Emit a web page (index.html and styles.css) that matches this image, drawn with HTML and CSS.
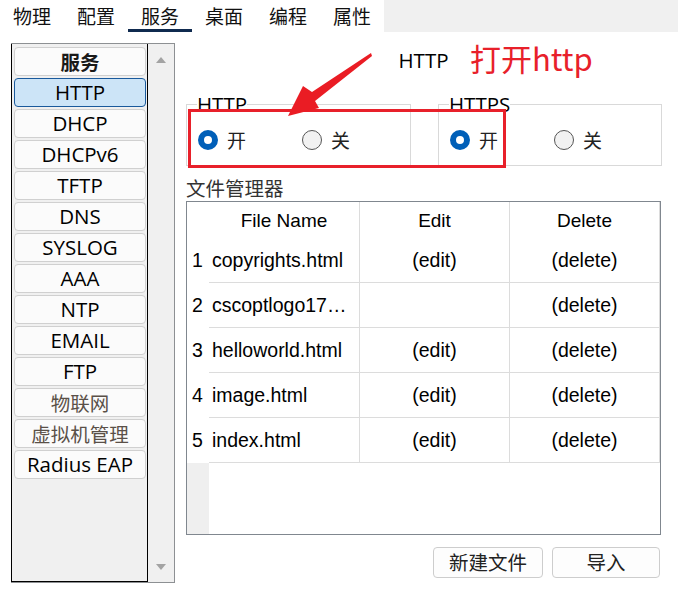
FILE: index.html
```html
<!DOCTYPE html>
<html lang="zh-CN">
<head>
<meta charset="utf-8">
<title>HTTP</title>
<link rel="stylesheet" href="styles.css">
</head>
<body>
<div class="page">
  <div class="tabbar">
    <div class="tab">物理</div>
    <div class="tab">配置</div>
    <div class="tab active">服务</div>
    <div class="tab">桌面</div>
    <div class="tab">编程</div>
    <div class="tab">属性</div>
    <div class="tabfill"></div>
  </div>
  <div class="main">
    <div class="sidebar">
      <div class="list">
        <div class="item cjk head">服务</div>
        <div class="item sel">HTTP</div>
        <div class="item">DHCP</div>
        <div class="item">DHCPv6</div>
        <div class="item">TFTP</div>
        <div class="item">DNS</div>
        <div class="item">SYSLOG</div>
        <div class="item">AAA</div>
        <div class="item">NTP</div>
        <div class="item">EMAIL</div>
        <div class="item">FTP</div>
        <div class="item cjk dim">物联网</div>
        <div class="item cjk dim">虚拟机管理</div>
        <div class="item">Radius EAP</div>
      </div>
      <div class="track">
        <span class="arrow up"></span>
        <span class="arrow down"></span>
      </div>
    </div>
    <div class="panel">
      <div class="title">HTTP</div>
      <div class="groups">
        <fieldset class="group">
          <legend>HTTP</legend>
          <div class="opts">
            <div class="opt"><span class="radio on"></span><span class="lbl">开</span></div>
            <div class="opt"><span class="radio"></span><span class="lbl">关</span></div>
          </div>
        </fieldset>
        <fieldset class="group">
          <legend>HTTPS</legend>
          <div class="opts">
            <div class="opt"><span class="radio on"></span><span class="lbl">开</span></div>
            <div class="opt"><span class="radio"></span><span class="lbl">关</span></div>
          </div>
        </fieldset>
      </div>
      <div class="fmlabel">文件管理器</div>
      <div class="table">
        <div class="grid">
          <div class="c num hdr"></div>
          <div class="c hdr ctr">File Name</div>
          <div class="c hdr ctr">Edit</div>
          <div class="c hdr ctr">Delete</div>

          <div class="c num">1</div>
          <div class="c row">copyrights.html</div>
          <div class="c row ctr">(edit)</div>
          <div class="c row ctr">(delete)</div>

          <div class="c num">2</div>
          <div class="c row">cscoptlogo17…</div>
          <div class="c row ctr"></div>
          <div class="c row ctr">(delete)</div>

          <div class="c num">3</div>
          <div class="c row">helloworld.html</div>
          <div class="c row ctr">(edit)</div>
          <div class="c row ctr">(delete)</div>

          <div class="c num">4</div>
          <div class="c row">image.html</div>
          <div class="c row ctr">(edit)</div>
          <div class="c row ctr">(delete)</div>

          <div class="c num">5</div>
          <div class="c row">index.html</div>
          <div class="c row ctr">(edit)</div>
          <div class="c row ctr">(delete)</div>
        </div>
        <div class="empty">
          <div class="emptynum"></div>
        </div>
      </div>
      <div class="buttons">
        <div class="btn wide">新建文件</div>
        <div class="btn">导入</div>
      </div>
    </div>
  </div>

  <div class="note">打开http</div>
  <div class="redbox"></div>
  <svg class="pointer" width="678" height="595" viewBox="0 0 678 595">
    <polygon points="371,53 312,92 303,86 288,116 319,108 315,101 372,56" fill="#ea1c24"/>
  </svg>
</div>
</body>
</html>
```

FILE: styles.css
```css
* { box-sizing: border-box; }
html, body { margin: 0; padding: 0; background: #ffffff; }
body {
  font-family: "Liberation Sans", Arial, "Noto Sans CJK SC", sans-serif;
  color: #000;
  width: 678px;
  height: 595px;
  overflow: hidden;
}
.page { position: relative; width: 678px; height: 595px; }

.tabbar { display: flex; height: 32px; }
.tab {
  width: 64px;
  height: 32px;
  padding-top: 5px;
  text-align: center;
  font-family: "Noto Sans CJK SC", sans-serif;
  font-size: 19px;
  line-height: 22px;
  color: #111;
  border-bottom: 3px solid transparent;
}
.tab.active { border-bottom-color: #0f2a4f; }
.tabfill { flex: 1; background: #f0f0f0; }

.main { display: flex; margin-top: 11px; }

.sidebar {
  margin-left: 11px;
  width: 164px;
  height: 540px;
  display: flex;
  border-top: 1px solid #8d9093;
  border-right: 1px solid #8d9093;
  border-bottom: 1px solid #8d9093;
}
.list {
  width: 137px;
  background: #f0f0f0;
  border-left: 1px solid #000;
  border-right: 1px solid #000;
  border-bottom: 1px solid #000;
  padding: 3px 1px 0 2px;
  display: flex;
  flex-direction: column;
  gap: 2px;
}
.item {
  height: 29px;
  background: #fbfbfb;
  border: 1px solid #d0d0d0;
  border-radius: 4px;
  text-align: center;
  font-family: "Open Sans", "Noto Sans", sans-serif;
  font-size: 20.5px;
  line-height: 27px;
  color: #000;
  white-space: nowrap;
}
.item.cjk { font-family: "Noto Sans CJK SC", sans-serif; font-size: 19.5px; }
.item.head { font-weight: bold; color: #1a1a1a; }
.item.dim { color: #5a5048; }
.item.sel { background: #cce4f7; border-color: #1a5a9c; }

.track {
  flex: 1;
  background: #f0f0f0;
  display: flex;
  flex-direction: column;
  justify-content: space-between;
  align-items: center;
  padding: 13px 0 12px;
}
.arrow { width: 0; height: 0; border-left: 5px solid transparent; border-right: 5px solid transparent; }
.arrow.up { border-bottom: 6px solid #a3a3a3; }
.arrow.down { border-top: 6px solid #a3a3a3; }

.panel { margin-left: 11px; width: 475px; }
.title {
  height: 34px;
  line-height: 34px;
  text-align: center;
  font-family: "Open Sans", "Noto Sans", sans-serif;
  font-size: 20.5px;
}
.groups {
  margin-top: 17px;
  display: grid;
  grid-template-columns: 225px 224px;
  column-gap: 27px;
}
.group {
  margin: 0;
  padding: 0 0 0 10px;
  border: 1px solid #d9d9d9;
  min-width: 0;
}
.group legend {
  padding: 0 0;
  font-family: "Open Sans", "Noto Sans", sans-serif;
  font-size: 20.5px;
  line-height: 20px;
}
.opts { display: flex; height: 51px; align-items: center; }
.opt { width: 104px; display: flex; align-items: center; gap: 9px; padding-left: 1px; }
.radio {
  width: 20px; height: 20px; border-radius: 50%;
  border: 1px solid #555;
  background: #f2f2f2;
}
.radio.on { border: 6px solid #005fb8; background: #fff; }
.lbl { font-family: "Noto Sans CJK SC", sans-serif; font-size: 19px; color: #222; line-height: 20px; }

.fmlabel {
  margin-top: 11px;
  height: 22px;
  line-height: 22px;
  font-family: "Noto Sans CJK SC", sans-serif;
  font-size: 19.5px;
  color: #333;
  margin-bottom: 2px;
}
.table {
  height: 334px;
  border: 1px solid #80878f;
  display: flex;
  flex-direction: column;
}
.grid {
  display: grid;
  grid-template-columns: 22px 151px 150px 150px;
  grid-template-rows: 36px repeat(5, 45px);
}
.c {
  font-size: 19.5px;
  display: flex;
  align-items: center;
  white-space: nowrap;
  overflow: hidden;
}
.c.hdr { font-size: 19px; }
.c.num { justify-content: center; padding-right: 1px; background: #fff; }
.c.hdr:not(.num) { border-right: 1px solid #dcdcdc; }
.c.row { border-right: 1px solid #dcdcdc; border-bottom: 1px solid #dcdcdc; padding-left: 3px; }
.c.ctr { justify-content: center; padding-left: 0; }
.c.hdr { padding-top: 2px; }
.empty { flex: 1; display: flex; }
.emptynum { width: 22px; background: #efefef; }

.buttons { display: flex; justify-content: flex-end; gap: 9px; margin-top: 12px; padding-right: 1px; }
.btn {
  width: 108px; height: 31px;
  border: 1px solid #cdcdcd;
  border-radius: 4px;
  background: #fdfdfd;
  text-align: center;
  font-family: "Noto Sans CJK SC", sans-serif;
  font-size: 19.5px;
  line-height: 28px;
  color: #222;
}
.btn.wide { width: 110px; }

.note {
  position: absolute;
  left: 470px;
  top: 37px;
  font-family: "Noto Sans CJK SC", sans-serif;
  font-size: 31px;
  line-height: 42px;
  color: #e8202a;
}
.redbox {
  position: absolute;
  left: 188px;
  top: 109px;
  width: 318px;
  height: 59px;
  border: 3px solid #e8202a;
}
.pointer { position: absolute; left: 0; top: 0; pointer-events: none; }
```
